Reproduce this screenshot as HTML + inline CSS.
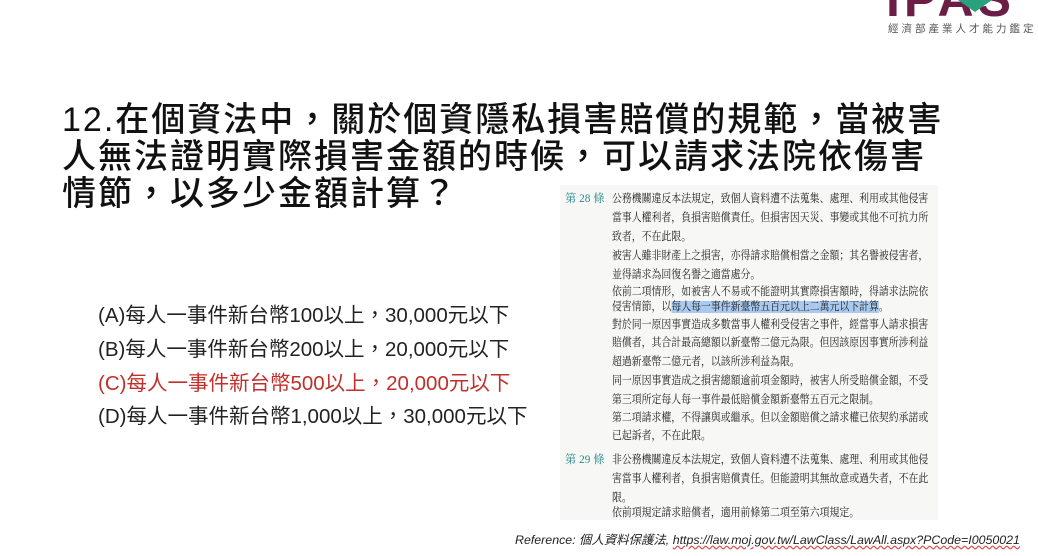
<!DOCTYPE html>
<html><head><meta charset="utf-8"><style>
body{margin:0;width:1038px;height:556px;background:#fff;position:relative;overflow:hidden;font-family:"Liberation Sans","Noto Sans CJK TC",sans-serif;}
.title{position:absolute;left:62px;top:102px;font-size:34px;line-height:37px;letter-spacing:2px;color:#111;font-weight:500;white-space:nowrap}
.opt{position:absolute;left:98px;font-size:20.5px;color:#222;white-space:nowrap}
.law{position:absolute;left:560px;top:185px;width:378px;height:335px;background:#f7f7f6;font-family:"Liberation Serif","Noto Serif CJK SC",serif;font-size:11.3px;color:#222}
.law .l{position:absolute;left:52px;white-space:nowrap;transform:scaleX(0.875);transform-origin:0 0}
.law .n{position:absolute;left:5px;color:#2a8a8a}
.hl{background:#a9c9ef}
.ref{position:absolute;left:515px;top:530px;font-size:12.4px;font-style:italic;color:#222;white-space:nowrap}
.ref u{text-decoration:underline wavy #d55}
</style></head><body>
<div style="position:absolute;left:886px;top:-30px;font-size:50px;font-weight:bold;color:#6b1d45;letter-spacing:4px">IPAS</div>
<svg style="position:absolute;left:958px;top:0" width="34" height="12"><polygon points="0,0 34,0 17,12" fill="#2aa07c"/></svg>
<div style="position:absolute;left:888px;top:21px;font-size:10.5px;color:#555;letter-spacing:3px">經濟部產業人才能力鑑定</div>
<div class="title">12.在個資法中，關於個資隱私損害賠償的規範，當被害<br>人無法證明實際損害金額的時候，可以請求法院依傷害<br>情節，以多少金額計算？</div>
<div class="opt" style="top:298px">(A)每人一事件新台幣100以上，30,000元以下</div>
<div class="opt" style="top:332px">(B)每人一事件新台幣200以上，20,000元以下</div>
<div class="opt" style="top:366px;color:#c0302a">(C)每人一事件新台幣500以上，20,000元以下</div>
<div class="opt" style="top:399px">(D)每人一事件新台幣1,000以上，30,000元以下</div>
<div class="law">
<div class="n" style="top:5px">第 28 條</div>
<div class="l" style="top:5px">公務機關違反本法規定，致個人資料遭不法蒐集、處理、利用或其他侵害</div>
<div class="l" style="top:24px">當事人權利者，負損害賠償責任。但損害因天災、事變或其他不可抗力所</div>
<div class="l" style="top:43px">致者，不在此限。</div>
<div class="l" style="top:62px">被害人雖非財產上之損害，亦得請求賠償相當之金額；其名譽被侵害者，</div>
<div class="l" style="top:81px">並得請求為回復名譽之適當處分。</div>
<div class="l" style="top:98px">依前二項情形，如被害人不易或不能證明其實際損害額時，得請求法院依</div>
<div class="l" style="top:113px">侵害情節，以<span class="hl">每人每一事件新臺幣五百元以上二萬元以下計算</span>。</div>
<div class="l" style="top:131px">對於同一原因事實造成多數當事人權利受侵害之事件，經當事人請求損害</div>
<div class="l" style="top:149px">賠償者，其合計最高總額以新臺幣二億元為限。但因該原因事實所涉利益</div>
<div class="l" style="top:168px">超過新臺幣二億元者，以該所涉利益為限。</div>
<div class="l" style="top:187px">同一原因事實造成之損害總額逾前項金額時，被害人所受賠償金額，不受</div>
<div class="l" style="top:206px">第三項所定每人每一事件最低賠償金額新臺幣五百元之限制。</div>
<div class="l" style="top:224px">第二項請求權，不得讓與或繼承。但以金額賠償之請求權已依契約承諾或</div>
<div class="l" style="top:242px">已起訴者，不在此限。</div>
<div class="n" style="top:266px">第 29 條</div>
<div class="l" style="top:266px">非公務機關違反本法規定，致個人資料遭不法蒐集、處理、利用或其他侵</div>
<div class="l" style="top:285px">害當事人權利者，負損害賠償責任。但能證明其無故意或過失者，不在此</div>
<div class="l" style="top:304px">限。</div>
<div class="l" style="top:319px">依前項規定請求賠償者，適用前條第二項至第六項規定。</div>
</div>
<div class="ref">Reference: 個人資料保護法, <u>https://law.moj.gov.tw/LawClass/LawAll.aspx?PCode=I0050021</u></div>
</body></html>
